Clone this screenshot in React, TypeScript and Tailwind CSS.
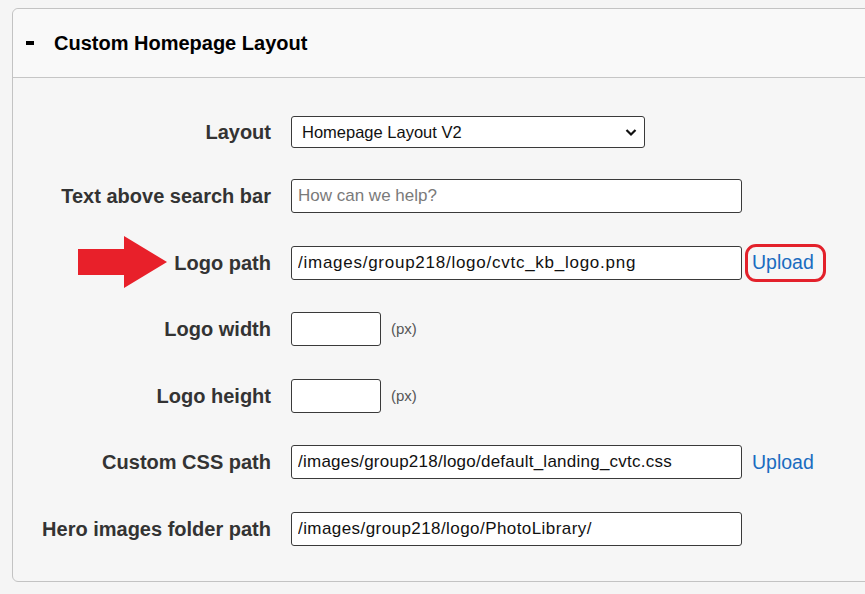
import React from "react";

const labelCls =
  "w-[258px] text-right font-bold text-[20px] leading-[24px] text-[#333333] [font-family:'Liberation_Sans',Arial,sans-serif] relative";
const inputCls =
  "h-[34px] bg-white border border-[#3a3a3a] rounded-[3px] px-[6px] text-[17px] text-[#111] [font-family:'Liberation_Sans',Arial,sans-serif] outline-none";

function Row({
  label,
  children,
  extra,
  className,
}: {
  label: string;
  children: React.ReactNode;
  extra?: React.ReactNode;
  className: string;
}) {
  return (
    <div className={"flex items-center " + className}>
      <div className={labelCls}>
        {extra}
        {label}
      </div>
      <div className="ml-[20px] flex items-center">{children}</div>
    </div>
  );
}

function Upload({ circled }: { circled?: boolean }) {
  return (
    <span className="relative ml-[10px] text-[19.5px] text-[#1a6cc0] [font-family:'Liberation_Sans',Arial,sans-serif]">
      {circled && (
        <span className="absolute left-[-7px] right-[-12px] top-[-4px] bottom-[-5px] border-[3px] border-[#e3212b] rounded-[11px]" />
      )}
      Upload
    </span>
  );
}

export default function App() {
  return (
    <div className="w-[865px] h-[594px] bg-[#f5f5f5] pt-[8px] pl-[12px] overflow-hidden">
      <div className="w-[870px] h-[574px] border border-[#c3c3c3] rounded-[6px] bg-[#f6f6f6]">
        <div className="h-[69px] bg-[#f9f9f9] border-b border-[#c6c6c6] rounded-tl-[6px] flex items-center">
          <span className="ml-[13px] w-[8px] h-[4px] bg-black" />
          <span className="ml-[20px] font-bold text-[20px] text-black [font-family:'Liberation_Sans',Arial,sans-serif]">
            Custom Homepage Layout
          </span>
        </div>
        <div className="flex flex-col">
          <Row label="Layout" className="mt-[38px]">
            <div className="relative w-[354px] h-[32px] bg-white border border-[#3a3a3a] rounded-[3px] flex items-center pl-[10px] text-[16.5px] text-[#111] [font-family:'Liberation_Sans',Arial,sans-serif]">
              Homepage Layout V2
              <svg
                className="absolute right-[7px] top-[11px]"
                width="12"
                height="9"
                viewBox="0 0 12 9"
              >
                <path d="M1.5 2 L6 6.5 L10.5 2" fill="none" stroke="#111" strokeWidth="2.2" />
              </svg>
            </div>
          </Row>
          <Row label="Text above search bar" className="mt-[31px]">
            <input
              className={inputCls + " w-[451px] placeholder:text-[#7a7a7a]"}
              placeholder="How can we help?"
              readOnly
            />
          </Row>
          <Row
            label="Logo path"
            className="mt-[32.6px]"
            extra={
              <svg
                className="absolute left-[65px] top-[-15px]"
                width="90"
                height="52"
                viewBox="0 0 90 52"
              >
                <polygon
                  points="0,13 46,13 46,0 89,26 46,52 46,39 0,39"
                  fill="#e8202a"
                />
              </svg>
            }
          >
            <input
              className={inputCls + " tracking-[0.74px] w-[451px]"}
              defaultValue="/images/group218/logo/cvtc_kb_logo.png"
              readOnly
            />
            <Upload circled />
          </Row>
          <Row label="Logo width" className="mt-[32.6px]">
            <input className={inputCls + " w-[90px]"} readOnly />
            <span className="ml-[10px] text-[15px] text-[#555] [font-family:'Liberation_Sans',Arial,sans-serif]">
              (px)
            </span>
          </Row>
          <Row label="Logo height" className="mt-[32.6px]">
            <input className={inputCls + " w-[90px]"} readOnly />
            <span className="ml-[10px] text-[15px] text-[#555] [font-family:'Liberation_Sans',Arial,sans-serif]">
              (px)
            </span>
          </Row>
          <Row label="Custom CSS path" className="mt-[32.6px]">
            <input
              className={inputCls + " tracking-[0.24px] w-[451px]"}
              defaultValue="/images/group218/logo/default_landing_cvtc.css"
              readOnly
            />
            <Upload />
          </Row>
          <Row label="Hero images folder path" className="mt-[32.6px]">
            <input
              className={inputCls + " tracking-[0.43px] w-[451px]"}
              defaultValue="/images/group218/logo/PhotoLibrary/"
              readOnly
            />
          </Row>
        </div>
      </div>
    </div>
  );
}
